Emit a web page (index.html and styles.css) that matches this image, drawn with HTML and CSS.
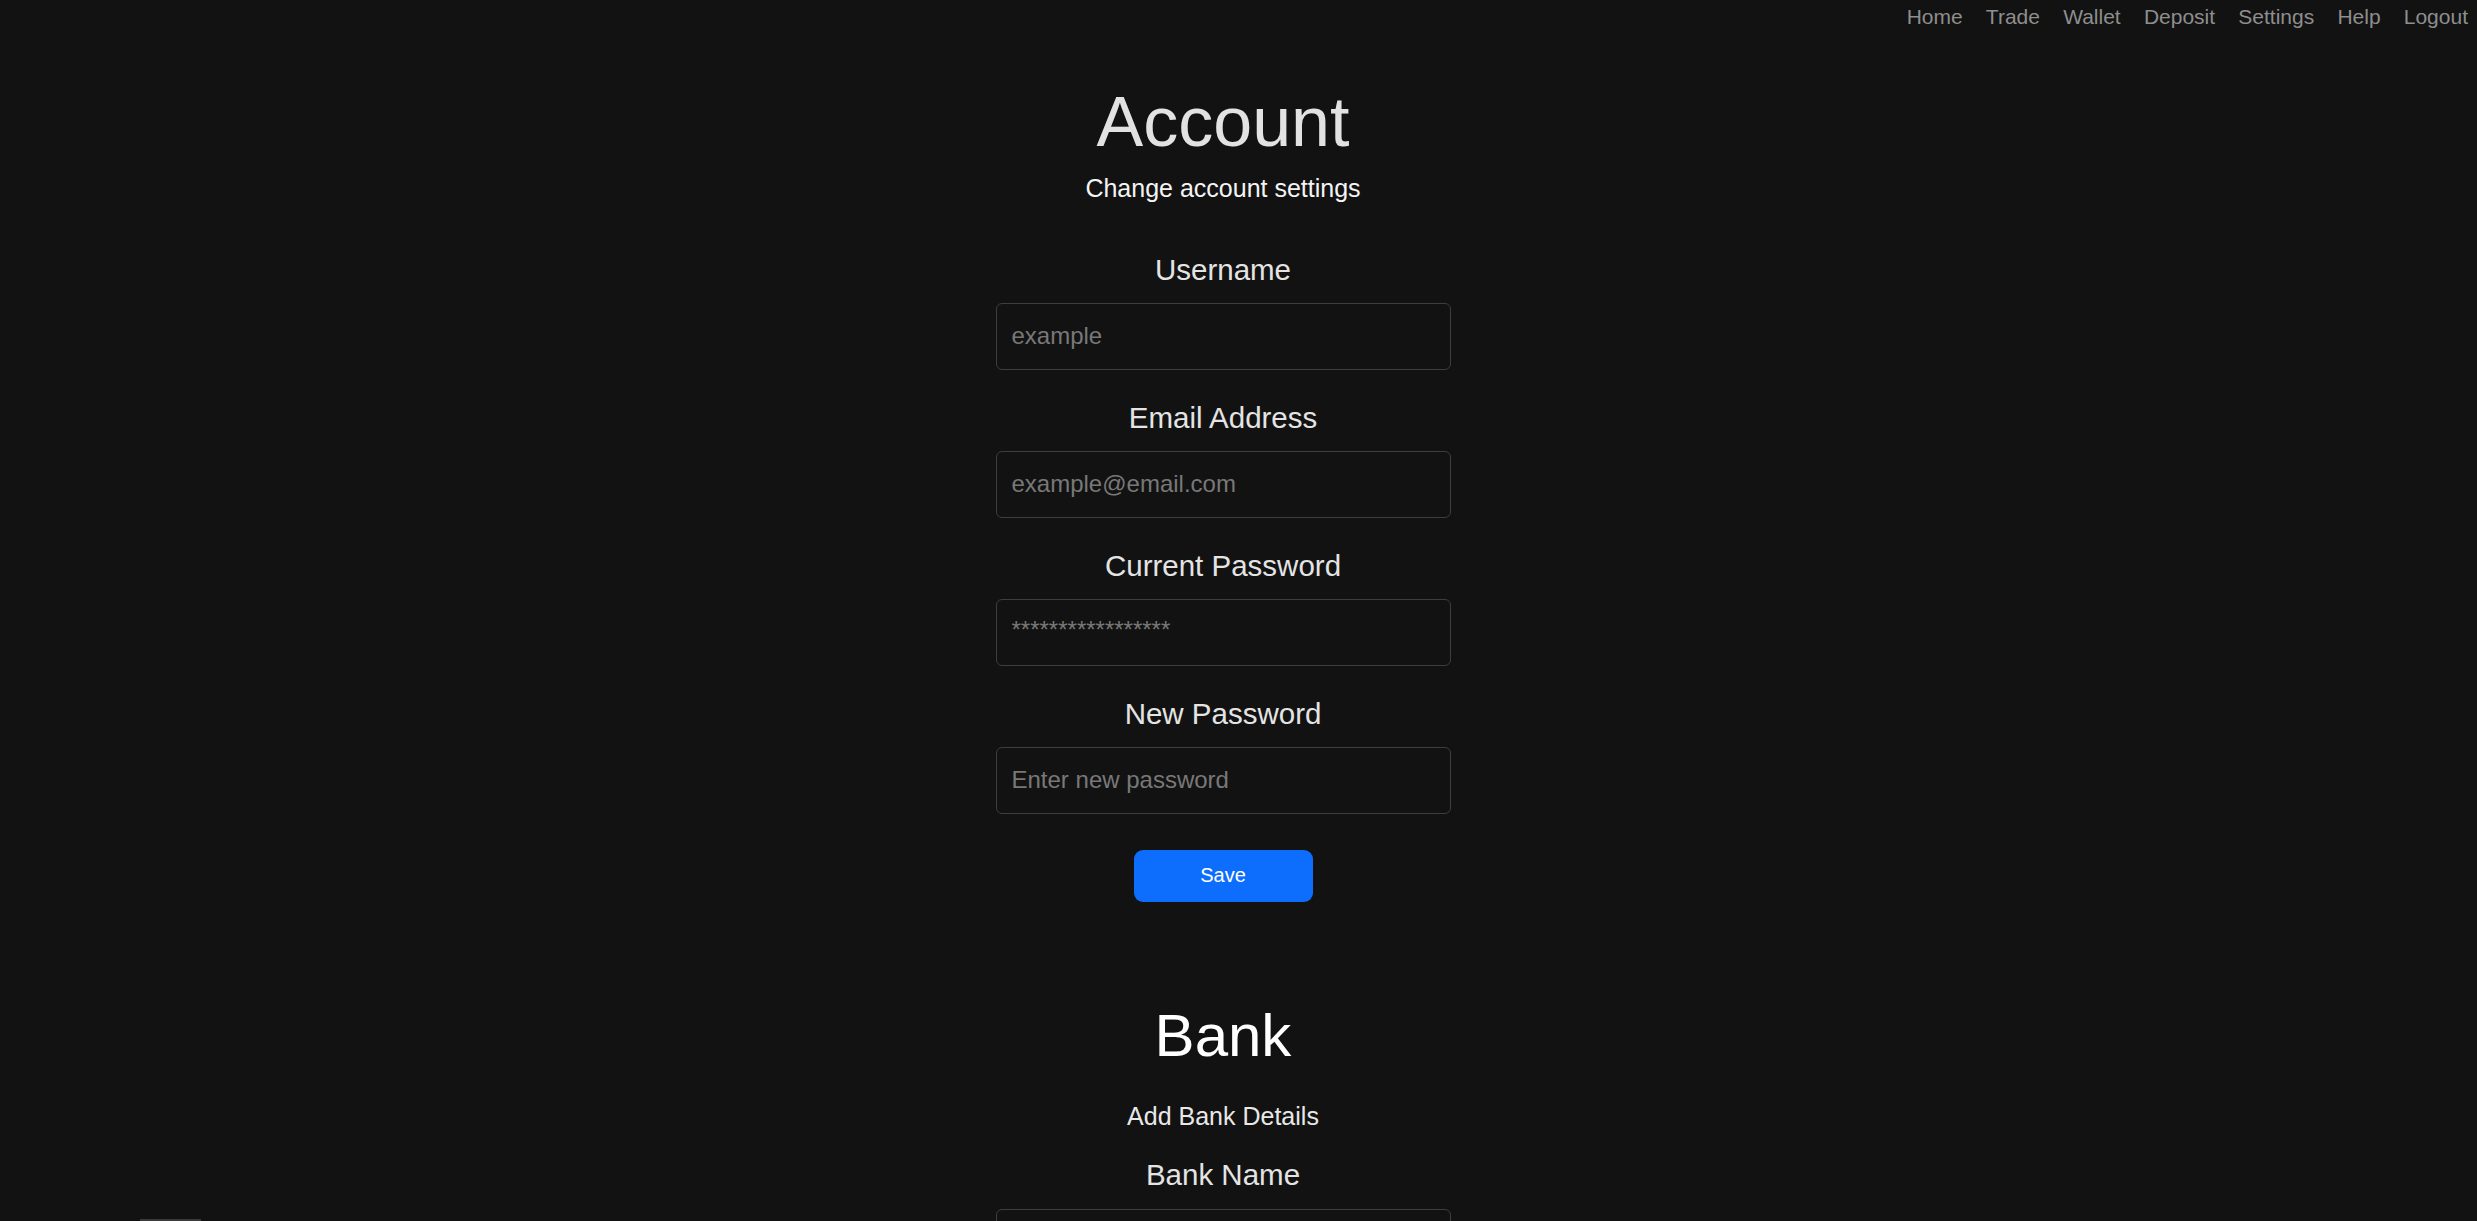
FILE: index.html
```html
<!DOCTYPE html>
<html lang="en">
<head>
<meta charset="utf-8">
<title>Settings</title>
<link rel="stylesheet" href="styles.css">
</head>
<body>
<nav class="topnav">
  <a class="nav-link" href="#">Home</a>
  <a class="nav-link" href="#">Trade</a>
  <a class="nav-link" href="#">Wallet</a>
  <a class="nav-link" href="#">Deposit</a>
  <a class="nav-link" href="#">Settings</a>
  <a class="nav-link" href="#">Help</a>
  <a class="nav-link" href="#">Logout</a>
</nav>
<main class="main">
  <section class="account">
    <h1 class="title">Account</h1>
    <p class="subtitle">Change account settings</p>
    <form class="form">
      <div class="field">
        <label class="label">Username</label>
        <input class="input" type="text" placeholder="example">
      </div>
      <div class="field">
        <label class="label">Email Address</label>
        <input class="input" type="text" placeholder="example@email.com">
      </div>
      <div class="field">
        <label class="label">Current Password</label>
        <input class="input input-stars" type="text" placeholder="*****************">
      </div>
      <div class="field">
        <label class="label">New Password</label>
        <input class="input" type="text" placeholder="Enter new password">
      </div>
      <button class="btn" type="button">Save</button>
    </form>
  </section>
  <section class="bank">
    <h2 class="bank-title">Bank</h2>
    <p class="bank-sub">Add Bank Details</p>
    <div class="field">
      <label class="label label-bank">Bank Name</label>
      <input class="input" type="text">
    </div>
  </section>
</main>
<div class="corner-tab"></div>
</body>
</html>
```
FILE: styles.css
```css
html, body {
  margin: 0;
  padding: 0;
  background: #121212;
  height: 100%;
  overflow: hidden;
}
body {
  font-family: "Liberation Sans", Arial, sans-serif;
  color: #dedede;
  position: relative;
}
.topnav {
  display: flex;
  justify-content: flex-end;
  gap: 23.2px;
  padding-right: 9px;
  height: 34px;
  line-height: 34px;
  font-size: 21px;
}
.nav-link {
  color: #8e8e8e;
  text-decoration: none;
}
.main {
  padding-right: 31px;
  display: flex;
  flex-direction: column;
  align-items: center;
}
.account, .bank {
  display: flex;
  flex-direction: column;
  align-items: center;
}
.title {
  margin: 45.75px 0 0;
  font-size: 70px;
  line-height: 84px;
  font-weight: normal;
  color: #e2e2e2;
}
.subtitle {
  margin: 6.65px 0 0;
  font-size: 25px;
  line-height: 36px;
  color: #f4f4f4;
}
.form {
  margin-top: 45.2px;
  display: flex;
  flex-direction: column;
  align-items: center;
}
.field {
  display: flex;
  flex-direction: column;
  align-items: center;
  margin-bottom: 30px;
}
.label {
  font-size: 29.5px;
  line-height: 36px;
  color: #e4e4e4;
  margin-bottom: 15px;
}
.input {
  box-sizing: border-box;
  width: 455px;
  height: 67px;
  background: #121212;
  border: 1.5px solid #3e3e3e;
  border-radius: 6px;
  padding: 0 15px;
  font-family: "Liberation Sans", Arial, sans-serif;
  font-size: 24px;
  color: #dedede;
  outline: none;
}
.input::placeholder {
  color: #787878;
}
.input-stars {
  padding-bottom: 4px;
}
.btn {
  margin-top: 6.4px;
  width: 179px;
  height: 52px;
  border: none;
  border-radius: 9px;
  background: #0d6efd;
  color: #ffffff;
  font-family: "Liberation Sans", Arial, sans-serif;
  font-size: 20px;
}
.bank {
  margin-top: 98px;
}
.bank-title {
  margin: 0;
  font-size: 60px;
  line-height: 72px;
  font-weight: normal;
  color: #ffffff;
}
.bank-sub {
  margin: 25.8px 0 0;
  font-size: 25px;
  line-height: 36px;
  color: #e8e8e8;
}
.bank .field {
  margin-top: 23.6px;
}
.label-bank {
  margin-bottom: 16px;
}
.corner-tab {
  position: absolute;
  left: 140px;
  top: 1219px;
  width: 61px;
  height: 2px;
  background: #3a3a3a;
}
```
